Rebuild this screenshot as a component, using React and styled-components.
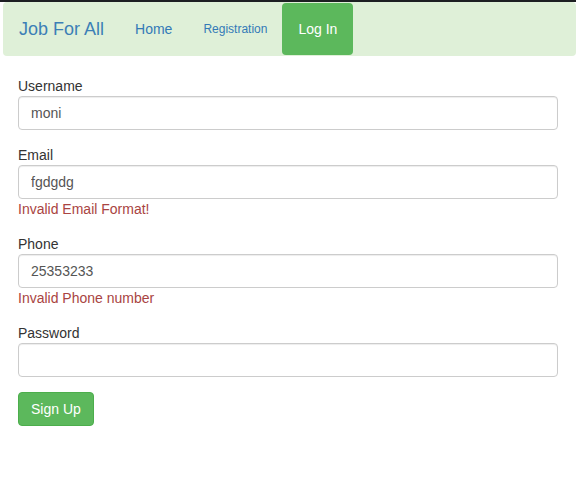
import React from 'react'
import styled, { createGlobalStyle } from 'styled-components'

const Global = createGlobalStyle`
    body {
        margin: 0;
        background: #fff;
        font-family: "Liberation Sans", Arial, sans-serif;
        font-size: 14px;
        color: #333;
    }
`

const TopLine = styled.div`
    height: 2px;
    background-color: #1d1f22;
`

const Nav = styled.nav`
    margin-left: 3px;
    height: 54px;
    background-color: #dff0d8;
    border-radius: 4px;
    display: flex;
    align-items: stretch;
`

const Brand = styled.a`
    display: flex;
    align-items: center;
    padding: 0 16px;
    font-size: 18px;
    color: #3c7fb6;
    text-decoration: none;
`

const NavLink = styled.a`
    display: flex;
    align-items: center;
    padding: 0 15px 0 ${p => p.$left || 15}px;
    font-size: ${p => p.$size || 14}px;
    color: #337ab7;
    text-decoration: none;
`

const ActiveLink = styled.a`
    display: flex;
    align-items: center;
    margin: 1px 0;
    padding: 0 16px;
    background-color: #5cb85c;
    border-radius: 4px;
    color: #fff;
    font-size: 14px;
    text-decoration: none;
`

const Form = styled.form`
    padding: 20px 18px 0 18px;
`

const Group = styled.div`
    margin-bottom: 15px;
`

const Label = styled.label`
    display: block;
    line-height: 20px;
    font-size: 14px;
    color: #333;
`

const Input = styled.input`
    display: block;
    box-sizing: border-box;
    width: 100%;
    height: 34px;
    padding: 6px 12px;
    font-family: inherit;
    font-size: 14px;
    color: #555;
    background: #fff;
    border: 1px solid #ccc;
    border-radius: 4px;
    box-shadow: inset 0 1px 1px rgba(0, 0, 0, 0.075);
    outline: none;
`

const Error = styled.div`
    line-height: 20px;
    font-size: 14px;
    color: #a94442;
`

const Button = styled.button`
    height: 34px;
    padding: 6px 12px;
    font-family: inherit;
    font-size: 14px;
    color: #fff;
    background-color: #5cb85c;
    border: 1px solid #4cae4c;
    border-radius: 4px;
`

const fields = [
    { label: 'Username', value: 'moni' },
    { label: 'Email', value: 'fgdgdg', error: 'Invalid Email Format!' },
    { label: 'Phone', value: '25353233', error: 'Invalid Phone number' },
    { label: 'Password', value: '', type: 'password' },
]

const App = () => {
    return (
        <>
            <Global />
            <TopLine />
            <Nav>
                <Brand href="#">Job For All</Brand>
                <NavLink href="#">Home</NavLink>
                <NavLink href="#" $size={12} $left={16}>Registration</NavLink>
                <ActiveLink href="#">Log In</ActiveLink>
            </Nav>
            <Form onSubmit={e => e.preventDefault()}>
                {fields.map(f => (
                    <Group key={f.label}>
                        <Label>{f.label}</Label>
                        <Input type={f.type || 'text'} defaultValue={f.value} />
                        {f.error && <Error>{f.error}</Error>}
                    </Group>
                ))}
                <Button type="submit">Sign Up</Button>
            </Form>
        </>
    )
}

export default App
